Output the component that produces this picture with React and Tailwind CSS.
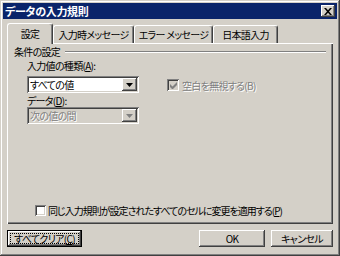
import React from 'react';

const raised = "shadow-[inset_-1px_-1px_#404040,inset_1px_1px_#ffffff,inset_-2px_-2px_#808080,inset_2px_2px_#d4d0c8]";
const sunken = "shadow-[inset_1px_1px_#808080,inset_-1px_-1px_#ffffff,inset_2px_2px_#404040,inset_-2px_-2px_#d4d0c8]";
const disabledText = "text-[#808080] [text-shadow:1px_1px_#ffffff]";

const Arrow = ({ color = "#000" }) => (
    <svg width="7" height="4" viewBox="0 0 7 4">
        <path d="M0 0h7L3.5 4z" fill={color} />
    </svg>
);

const Combo = ({ value, disabled }) => (
    <div className={`relative h-[17px] w-[112px] flex items-center ${sunken} ${disabled ? 'bg-[#d4d0c8]' : 'bg-white'}`}>
        <span className={`pl-[3px] flex-1 ${disabled ? disabledText : 'text-black'}`}>{value}</span>
        <div className={`mr-[2px] w-[15px] h-[13px] flex items-center justify-center bg-[#d4d0c8] ${raised}`}>
            <Arrow color={disabled ? "#808080" : "#000"} />
        </div>
    </div>
);

const Tab = ({ label, width, active }) => (
    <div
        className={`${width} flex justify-center rounded-t-[3px] border-t border-l border-white border-r border-r-[#404040] shadow-[inset_-1px_0_#808080] bg-[#d4d0c8] ${active ? 'h-[21px] -mb-px relative z-10 pt-[3px]' : 'h-[18px] pt-[2px]'}`}
    >
        {label}
    </div>
);

const Button = ({ children, width, isDefault }) => (
    <div className={`${width} h-[17px] ${isDefault ? 'border border-black' : ''}`}>
        <div className={`h-full flex items-center justify-center ${raised} ${isDefault ? 'p-[2px]' : ''}`}>
            {isDefault ? (
                <div className="w-full h-full flex items-center justify-center border border-dotted border-black">{children}</div>
            ) : children}
        </div>
    </div>
);

export default function App() {
    return (
        <div className="w-[340px] h-[256px] bg-[#d4d0c8] p-[3px] flex flex-col whitespace-nowrap font-['Noto_Sans_CJK_JP','Liberation_Sans',sans-serif] [font-feature-settings:'palt'] text-[10px] leading-[13px] tracking-[-0.7px] text-black shadow-[inset_-1px_-1px_#404040,inset_1px_1px_#d4d0c8,inset_-2px_-2px_#808080,inset_2px_2px_#ffffff]">
            {/* title bar */}
            <div className="h-[16px] bg-[#0a246a] flex items-center pl-[2px] pr-[2px]">
                <span className="flex-1 text-white font-bold text-[11px] tracking-[-0.3px]">データの入力規則</span>
                <div className={`w-[14px] h-[12px] bg-[#d4d0c8] flex items-center justify-center ${raised}`}>
                    <svg width="8" height="7" viewBox="0 0 8 7">
                        <path d="M0 0h2l2 2.2L6 0h2L5 3.5 8 7H6L4 4.8 2 7H0l3-3.5z" fill="#000" />
                    </svg>
                </div>
            </div>

            <div className="flex-1 flex flex-col px-[4px] pt-[4px]">
                {/* tabs */}
                <div className="flex items-end h-[20px]">
                    <Tab label="設定" width="w-[46px]" active />
                    <Tab label="入力時メッセージ" width="w-[81px]" />
                    <Tab label="エラー メッセージ" width="w-[79px]" />
                    <Tab label="日本語入力" width="w-[65px]" />
                </div>

                {/* tab panel */}
                <div className="h-[181px] flex flex-col pl-[7px] pr-[7px] pt-[3px] pb-[7px] shadow-[inset_1px_1px_#ffffff,inset_-1px_-1px_#404040,inset_-2px_-2px_#808080]">
                    <div className="flex items-center h-[12px] leading-[12px]">
                        <span>条件の設定</span>
                        <div className="flex-1 ml-[5px] h-[2px] border-t border-[#808080] border-b border-b-white" />
                    </div>

                    <div className="flex pl-[13px] mt-[2px]">
                        <div className="flex flex-col w-[112px]">
                            <span className="leading-[12px]">入力値の種類(<span className="underline">A</span>):</span>
                            <div className="mt-[4px]">
                                <Combo value="すべての値" />
                            </div>
                            <span className="leading-[12px] mt-[2px]">データ(<span className="underline">D</span>):</span>
                            <Combo value="次の値の間" disabled />
                        </div>
                        <div className="ml-[28px] mt-[19px] flex items-center h-[12px]">
                            <div className={`w-[12px] h-[12px] bg-[#d4d0c8] flex items-center justify-center ${sunken}`}>
                                <svg width="7" height="7" viewBox="0 0 7 7">
                                    <path d="M0 2v3l2 2h1l4-4V0L2.5 4.5z" fill="#808080" />
                                </svg>
                            </div>
                            <span className={`ml-[3px] ${disabledText}`}>空白を無視する(B)</span>
                        </div>
                    </div>

                    <div className="mt-auto flex items-center pl-[21px]">
                        <div className={`w-[11px] h-[11px] bg-white ${sunken}`} />
                        <span className="ml-[2px] tracking-[-1px]">同じ入力規則が設定されたすべてのセルに変更を適用する(<span className="underline">P</span>)</span>
                    </div>
                </div>

                {/* buttons */}
                <div className="flex mt-[6px]">
                    <Button width="w-[75px]" isDefault>すべてクリア(<span className="underline">C</span>)</Button>
                    <div className="ml-auto">
                        <Button width="w-[66px]">OK</Button>
                    </div>
                    <div className="ml-[6px]">
                        <Button width="w-[62px]">キャンセル</Button>
                    </div>
                </div>
            </div>
        </div>
    );
}
